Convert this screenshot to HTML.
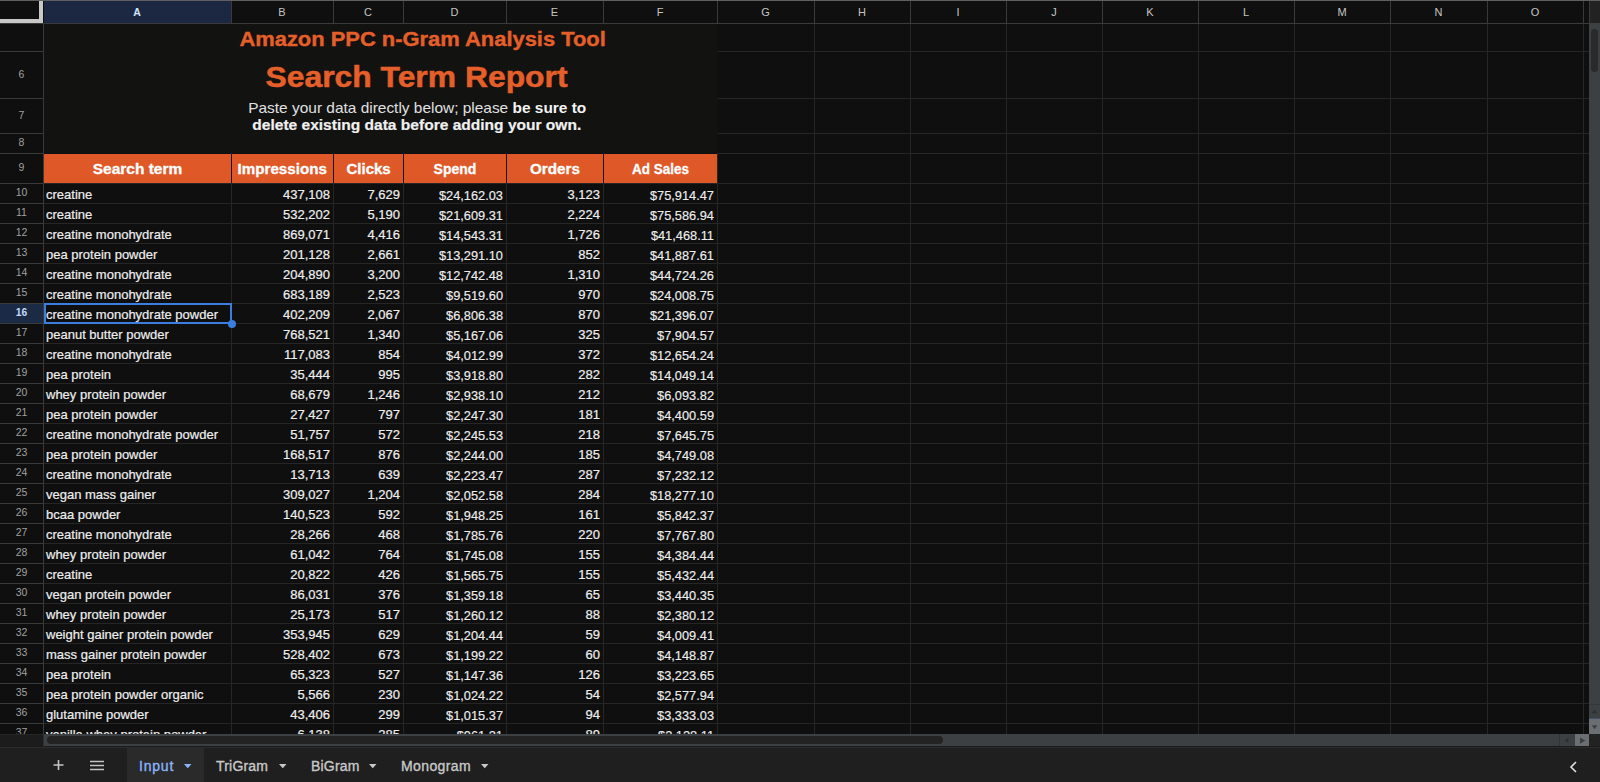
<!DOCTYPE html><html><head><meta charset="utf-8"><style>
*{margin:0;padding:0;box-sizing:border-box}
html,body{width:1600px;height:782px;overflow:hidden;background:#0f0f0f;font-family:"Liberation Sans",sans-serif}
.a{position:absolute}
.hl{position:absolute;height:1px;background:#262626}
.vl{position:absolute;width:1px;background:#262626}
.ch{position:absolute;top:1px;height:22px;line-height:22px;text-align:center;font-size:11px;color:#c4c4c4}
.rh{position:absolute;left:0;width:43px;text-align:center;font-size:10.5px;color:#a0a0a0}
.t{position:absolute;white-space:nowrap;font-size:13px;color:#eeeeee;height:20px;line-height:20px;-webkit-text-stroke:0.2px #eeeeee}
.n{position:absolute;white-space:nowrap;font-size:13px;color:#eeeeee;text-align:right;height:20px;line-height:20px;-webkit-text-stroke:0.2px #eeeeee}
.m{position:absolute;white-space:nowrap;font-size:12.8px;color:#eeeeee;text-align:right;height:20px;line-height:20px;-webkit-text-stroke:0.15px #eeeeee}
.hd{position:absolute;top:154px;height:29px;line-height:31px;background:#de5828;color:#fff;font-weight:bold;font-size:14px;text-align:center;-webkit-text-stroke:0.3px #fff}

</style></head><body>
<div class="hl" style="left:43px;top:23px;width:1546px"></div>
<div class="hl" style="left:717px;top:51px;width:872px"></div>
<div class="hl" style="left:717px;top:98px;width:872px"></div>
<div class="hl" style="left:717px;top:133px;width:872px"></div>
<div class="hl" style="left:717px;top:153px;width:872px"></div>
<div class="hl" style="left:43px;top:183px;width:1546px"></div>
<div class="hl" style="left:43px;top:203px;width:1546px"></div>
<div class="hl" style="left:43px;top:223px;width:1546px"></div>
<div class="hl" style="left:43px;top:243px;width:1546px"></div>
<div class="hl" style="left:43px;top:263px;width:1546px"></div>
<div class="hl" style="left:43px;top:283px;width:1546px"></div>
<div class="hl" style="left:43px;top:303px;width:1546px"></div>
<div class="hl" style="left:43px;top:323px;width:1546px"></div>
<div class="hl" style="left:43px;top:343px;width:1546px"></div>
<div class="hl" style="left:43px;top:363px;width:1546px"></div>
<div class="hl" style="left:43px;top:383px;width:1546px"></div>
<div class="hl" style="left:43px;top:403px;width:1546px"></div>
<div class="hl" style="left:43px;top:423px;width:1546px"></div>
<div class="hl" style="left:43px;top:443px;width:1546px"></div>
<div class="hl" style="left:43px;top:463px;width:1546px"></div>
<div class="hl" style="left:43px;top:483px;width:1546px"></div>
<div class="hl" style="left:43px;top:503px;width:1546px"></div>
<div class="hl" style="left:43px;top:523px;width:1546px"></div>
<div class="hl" style="left:43px;top:543px;width:1546px"></div>
<div class="hl" style="left:43px;top:563px;width:1546px"></div>
<div class="hl" style="left:43px;top:583px;width:1546px"></div>
<div class="hl" style="left:43px;top:603px;width:1546px"></div>
<div class="hl" style="left:43px;top:623px;width:1546px"></div>
<div class="hl" style="left:43px;top:643px;width:1546px"></div>
<div class="hl" style="left:43px;top:663px;width:1546px"></div>
<div class="hl" style="left:43px;top:683px;width:1546px"></div>
<div class="hl" style="left:43px;top:703px;width:1546px"></div>
<div class="hl" style="left:43px;top:723px;width:1546px"></div>
<div class="vl" style="left:231px;top:153px;height:581px"></div>
<div class="vl" style="left:333px;top:153px;height:581px"></div>
<div class="vl" style="left:403px;top:153px;height:581px"></div>
<div class="vl" style="left:506px;top:153px;height:581px"></div>
<div class="vl" style="left:603px;top:153px;height:581px"></div>
<div class="vl" style="left:717px;top:153px;height:581px"></div>
<div class="vl" style="left:814px;top:23px;height:711px"></div>
<div class="vl" style="left:910px;top:23px;height:711px"></div>
<div class="vl" style="left:1006px;top:23px;height:711px"></div>
<div class="vl" style="left:1102px;top:23px;height:711px"></div>
<div class="vl" style="left:1198px;top:23px;height:711px"></div>
<div class="vl" style="left:1294px;top:23px;height:711px"></div>
<div class="vl" style="left:1390px;top:23px;height:711px"></div>
<div class="vl" style="left:1487px;top:23px;height:711px"></div>
<div class="vl" style="left:1583px;top:23px;height:711px"></div>
<div class="a" style="left:44px;top:24px;width:674px;height:129px;background:#121211"></div>
<div class="a" style="left:23px;top:27px;width:800px;text-align:center;line-height:24px"><span style="display:inline-block;color:#e45f2a;font-weight:bold;font-size:21px;transform:scaleX(1.043);-webkit-text-stroke:0.4px #e45f2a">Amazon PPC n-Gram Analysis Tool</span></div>
<div class="a" style="left:17px;top:61px;width:800px;text-align:center;line-height:32px"><span style="display:inline-block;color:#e45f2a;font-weight:bold;font-size:29px;transform:scaleX(1.098);-webkit-text-stroke:0.5px #e45f2a">Search Term Report</span></div>
<div class="a" style="left:17px;top:99px;width:800px;text-align:center;line-height:17px;color:#f0f0f0;font-size:15px"><span style="display:inline-block;transform:scaleX(1.029);color:#e0e0e0">Paste your data directly below; please <b style="color:#f4f4f4">be sure to</b></span><br><span style="display:inline-block;transform:scaleX(1.036);font-weight:bold;-webkit-text-stroke:0.2px #f0f0f0">delete existing data before adding your own.</span></div>
<div class="hd" style="left:44px;width:187px"><span style="display:inline-block;transform:scaleX(1.105)">Search term</span></div>
<div class="hd" style="left:232px;width:101px"><span style="display:inline-block;transform:scaleX(1.083)">Impressions</span></div>
<div class="vl" style="left:231px;top:154px;height:29px;background:#161616"></div>
<div class="hd" style="left:334px;width:69px"><span style="display:inline-block;transform:scaleX(1.07)">Clicks</span></div>
<div class="vl" style="left:333px;top:154px;height:29px;background:#161616"></div>
<div class="hd" style="left:404px;width:102px"><span style="display:inline-block;transform:scaleX(1.0)">Spend</span></div>
<div class="vl" style="left:403px;top:154px;height:29px;background:#161616"></div>
<div class="hd" style="left:507px;width:96px"><span style="display:inline-block;transform:scaleX(1.09)">Orders</span></div>
<div class="vl" style="left:506px;top:154px;height:29px;background:#161616"></div>
<div class="hd" style="left:604px;width:113px"><span style="display:inline-block;transform:scaleX(0.962)">Ad Sales</span></div>
<div class="vl" style="left:603px;top:154px;height:29px;background:#161616"></div>
<div class="t" style="left:46px;top:185px">creatine</div>
<div class="n" style="right:1270px;top:185px">437,108</div>
<div class="n" style="right:1200px;top:185px">7,629</div>
<div class="m" style="right:1097px;top:185.5px">$24,162.03</div>
<div class="n" style="right:1000px;top:185px">3,123</div>
<div class="m" style="right:886px;top:185.5px">$75,914.47</div>
<div class="t" style="left:46px;top:205px">creatine</div>
<div class="n" style="right:1270px;top:205px">532,202</div>
<div class="n" style="right:1200px;top:205px">5,190</div>
<div class="m" style="right:1097px;top:205.5px">$21,609.31</div>
<div class="n" style="right:1000px;top:205px">2,224</div>
<div class="m" style="right:886px;top:205.5px">$75,586.94</div>
<div class="t" style="left:46px;top:225px">creatine monohydrate</div>
<div class="n" style="right:1270px;top:225px">869,071</div>
<div class="n" style="right:1200px;top:225px">4,416</div>
<div class="m" style="right:1097px;top:225.5px">$14,543.31</div>
<div class="n" style="right:1000px;top:225px">1,726</div>
<div class="m" style="right:886px;top:225.5px">$41,468.11</div>
<div class="t" style="left:46px;top:245px">pea protein powder</div>
<div class="n" style="right:1270px;top:245px">201,128</div>
<div class="n" style="right:1200px;top:245px">2,661</div>
<div class="m" style="right:1097px;top:245.5px">$13,291.10</div>
<div class="n" style="right:1000px;top:245px">852</div>
<div class="m" style="right:886px;top:245.5px">$41,887.61</div>
<div class="t" style="left:46px;top:265px">creatine monohydrate</div>
<div class="n" style="right:1270px;top:265px">204,890</div>
<div class="n" style="right:1200px;top:265px">3,200</div>
<div class="m" style="right:1097px;top:265.5px">$12,742.48</div>
<div class="n" style="right:1000px;top:265px">1,310</div>
<div class="m" style="right:886px;top:265.5px">$44,724.26</div>
<div class="t" style="left:46px;top:285px">creatine monohydrate</div>
<div class="n" style="right:1270px;top:285px">683,189</div>
<div class="n" style="right:1200px;top:285px">2,523</div>
<div class="m" style="right:1097px;top:285.5px">$9,519.60</div>
<div class="n" style="right:1000px;top:285px">970</div>
<div class="m" style="right:886px;top:285.5px">$24,008.75</div>
<div class="t" style="left:46px;top:305px">creatine monohydrate powder</div>
<div class="n" style="right:1270px;top:305px">402,209</div>
<div class="n" style="right:1200px;top:305px">2,067</div>
<div class="m" style="right:1097px;top:305.5px">$6,806.38</div>
<div class="n" style="right:1000px;top:305px">870</div>
<div class="m" style="right:886px;top:305.5px">$21,396.07</div>
<div class="t" style="left:46px;top:325px">peanut butter powder</div>
<div class="n" style="right:1270px;top:325px">768,521</div>
<div class="n" style="right:1200px;top:325px">1,340</div>
<div class="m" style="right:1097px;top:325.5px">$5,167.06</div>
<div class="n" style="right:1000px;top:325px">325</div>
<div class="m" style="right:886px;top:325.5px">$7,904.57</div>
<div class="t" style="left:46px;top:345px">creatine monohydrate</div>
<div class="n" style="right:1270px;top:345px">117,083</div>
<div class="n" style="right:1200px;top:345px">854</div>
<div class="m" style="right:1097px;top:345.5px">$4,012.99</div>
<div class="n" style="right:1000px;top:345px">372</div>
<div class="m" style="right:886px;top:345.5px">$12,654.24</div>
<div class="t" style="left:46px;top:365px">pea protein</div>
<div class="n" style="right:1270px;top:365px">35,444</div>
<div class="n" style="right:1200px;top:365px">995</div>
<div class="m" style="right:1097px;top:365.5px">$3,918.80</div>
<div class="n" style="right:1000px;top:365px">282</div>
<div class="m" style="right:886px;top:365.5px">$14,049.14</div>
<div class="t" style="left:46px;top:385px">whey protein powder</div>
<div class="n" style="right:1270px;top:385px">68,679</div>
<div class="n" style="right:1200px;top:385px">1,246</div>
<div class="m" style="right:1097px;top:385.5px">$2,938.10</div>
<div class="n" style="right:1000px;top:385px">212</div>
<div class="m" style="right:886px;top:385.5px">$6,093.82</div>
<div class="t" style="left:46px;top:405px">pea protein powder</div>
<div class="n" style="right:1270px;top:405px">27,427</div>
<div class="n" style="right:1200px;top:405px">797</div>
<div class="m" style="right:1097px;top:405.5px">$2,247.30</div>
<div class="n" style="right:1000px;top:405px">181</div>
<div class="m" style="right:886px;top:405.5px">$4,400.59</div>
<div class="t" style="left:46px;top:425px">creatine monohydrate powder</div>
<div class="n" style="right:1270px;top:425px">51,757</div>
<div class="n" style="right:1200px;top:425px">572</div>
<div class="m" style="right:1097px;top:425.5px">$2,245.53</div>
<div class="n" style="right:1000px;top:425px">218</div>
<div class="m" style="right:886px;top:425.5px">$7,645.75</div>
<div class="t" style="left:46px;top:445px">pea protein powder</div>
<div class="n" style="right:1270px;top:445px">168,517</div>
<div class="n" style="right:1200px;top:445px">876</div>
<div class="m" style="right:1097px;top:445.5px">$2,244.00</div>
<div class="n" style="right:1000px;top:445px">185</div>
<div class="m" style="right:886px;top:445.5px">$4,749.08</div>
<div class="t" style="left:46px;top:465px">creatine monohydrate</div>
<div class="n" style="right:1270px;top:465px">13,713</div>
<div class="n" style="right:1200px;top:465px">639</div>
<div class="m" style="right:1097px;top:465.5px">$2,223.47</div>
<div class="n" style="right:1000px;top:465px">287</div>
<div class="m" style="right:886px;top:465.5px">$7,232.12</div>
<div class="t" style="left:46px;top:485px">vegan mass gainer</div>
<div class="n" style="right:1270px;top:485px">309,027</div>
<div class="n" style="right:1200px;top:485px">1,204</div>
<div class="m" style="right:1097px;top:485.5px">$2,052.58</div>
<div class="n" style="right:1000px;top:485px">284</div>
<div class="m" style="right:886px;top:485.5px">$18,277.10</div>
<div class="t" style="left:46px;top:505px">bcaa powder</div>
<div class="n" style="right:1270px;top:505px">140,523</div>
<div class="n" style="right:1200px;top:505px">592</div>
<div class="m" style="right:1097px;top:505.5px">$1,948.25</div>
<div class="n" style="right:1000px;top:505px">161</div>
<div class="m" style="right:886px;top:505.5px">$5,842.37</div>
<div class="t" style="left:46px;top:525px">creatine monohydrate</div>
<div class="n" style="right:1270px;top:525px">28,266</div>
<div class="n" style="right:1200px;top:525px">468</div>
<div class="m" style="right:1097px;top:525.5px">$1,785.76</div>
<div class="n" style="right:1000px;top:525px">220</div>
<div class="m" style="right:886px;top:525.5px">$7,767.80</div>
<div class="t" style="left:46px;top:545px">whey protein powder</div>
<div class="n" style="right:1270px;top:545px">61,042</div>
<div class="n" style="right:1200px;top:545px">764</div>
<div class="m" style="right:1097px;top:545.5px">$1,745.08</div>
<div class="n" style="right:1000px;top:545px">155</div>
<div class="m" style="right:886px;top:545.5px">$4,384.44</div>
<div class="t" style="left:46px;top:565px">creatine</div>
<div class="n" style="right:1270px;top:565px">20,822</div>
<div class="n" style="right:1200px;top:565px">426</div>
<div class="m" style="right:1097px;top:565.5px">$1,565.75</div>
<div class="n" style="right:1000px;top:565px">155</div>
<div class="m" style="right:886px;top:565.5px">$5,432.44</div>
<div class="t" style="left:46px;top:585px">vegan protein powder</div>
<div class="n" style="right:1270px;top:585px">86,031</div>
<div class="n" style="right:1200px;top:585px">376</div>
<div class="m" style="right:1097px;top:585.5px">$1,359.18</div>
<div class="n" style="right:1000px;top:585px">65</div>
<div class="m" style="right:886px;top:585.5px">$3,440.35</div>
<div class="t" style="left:46px;top:605px">whey protein powder</div>
<div class="n" style="right:1270px;top:605px">25,173</div>
<div class="n" style="right:1200px;top:605px">517</div>
<div class="m" style="right:1097px;top:605.5px">$1,260.12</div>
<div class="n" style="right:1000px;top:605px">88</div>
<div class="m" style="right:886px;top:605.5px">$2,380.12</div>
<div class="t" style="left:46px;top:625px">weight gainer protein powder</div>
<div class="n" style="right:1270px;top:625px">353,945</div>
<div class="n" style="right:1200px;top:625px">629</div>
<div class="m" style="right:1097px;top:625.5px">$1,204.44</div>
<div class="n" style="right:1000px;top:625px">59</div>
<div class="m" style="right:886px;top:625.5px">$4,009.41</div>
<div class="t" style="left:46px;top:645px">mass gainer protein powder</div>
<div class="n" style="right:1270px;top:645px">528,402</div>
<div class="n" style="right:1200px;top:645px">673</div>
<div class="m" style="right:1097px;top:645.5px">$1,199.22</div>
<div class="n" style="right:1000px;top:645px">60</div>
<div class="m" style="right:886px;top:645.5px">$4,148.87</div>
<div class="t" style="left:46px;top:665px">pea protein</div>
<div class="n" style="right:1270px;top:665px">65,323</div>
<div class="n" style="right:1200px;top:665px">527</div>
<div class="m" style="right:1097px;top:665.5px">$1,147.36</div>
<div class="n" style="right:1000px;top:665px">126</div>
<div class="m" style="right:886px;top:665.5px">$3,223.65</div>
<div class="t" style="left:46px;top:685px">pea protein powder organic</div>
<div class="n" style="right:1270px;top:685px">5,566</div>
<div class="n" style="right:1200px;top:685px">230</div>
<div class="m" style="right:1097px;top:685.5px">$1,024.22</div>
<div class="n" style="right:1000px;top:685px">54</div>
<div class="m" style="right:886px;top:685.5px">$2,577.94</div>
<div class="t" style="left:46px;top:705px">glutamine powder</div>
<div class="n" style="right:1270px;top:705px">43,406</div>
<div class="n" style="right:1200px;top:705px">299</div>
<div class="m" style="right:1097px;top:705.5px">$1,015.37</div>
<div class="n" style="right:1000px;top:705px">94</div>
<div class="m" style="right:886px;top:705.5px">$3,333.03</div>
<div class="t" style="left:46px;top:725px">vanilla whey protein powder</div>
<div class="n" style="right:1270px;top:725px">6,138</div>
<div class="n" style="right:1200px;top:725px">285</div>
<div class="m" style="right:1097px;top:725.5px">$961.21</div>
<div class="n" style="right:1000px;top:725px">89</div>
<div class="m" style="right:886px;top:725.5px">$2,128.11</div>
<div class="a" style="left:0;top:734px;width:1600px;height:48px;background:#1f1f1f"></div>
<div class="a" style="left:0;top:23px;width:43px;height:711px;background:#0f0f0f"></div>
<div class="hl" style="left:0;top:23px;width:43px;background:#3a3a3a"></div>
<div class="hl" style="left:0;top:51px;width:43px;background:#3a3a3a"></div>
<div class="rh" style="top:51px;height:47px;line-height:46px;">6</div>
<div class="hl" style="left:0;top:98px;width:43px;background:#3a3a3a"></div>
<div class="rh" style="top:98px;height:35px;line-height:34px;">7</div>
<div class="hl" style="left:0;top:133px;width:43px;background:#3a3a3a"></div>
<div class="rh" style="top:133px;height:20px;line-height:19px;">8</div>
<div class="hl" style="left:0;top:153px;width:43px;background:#3a3a3a"></div>
<div class="rh" style="top:153px;height:30px;line-height:29px;">9</div>
<div class="hl" style="left:0;top:183px;width:43px;background:#3a3a3a"></div>
<div class="rh" style="top:183px;height:20px;line-height:19px;">10</div>
<div class="hl" style="left:0;top:203px;width:43px;background:#3a3a3a"></div>
<div class="rh" style="top:203px;height:20px;line-height:19px;">11</div>
<div class="hl" style="left:0;top:223px;width:43px;background:#3a3a3a"></div>
<div class="rh" style="top:223px;height:20px;line-height:19px;">12</div>
<div class="hl" style="left:0;top:243px;width:43px;background:#3a3a3a"></div>
<div class="rh" style="top:243px;height:20px;line-height:19px;">13</div>
<div class="hl" style="left:0;top:263px;width:43px;background:#3a3a3a"></div>
<div class="rh" style="top:263px;height:20px;line-height:19px;">14</div>
<div class="hl" style="left:0;top:283px;width:43px;background:#3a3a3a"></div>
<div class="rh" style="top:283px;height:20px;line-height:19px;">15</div>
<div class="hl" style="left:0;top:303px;width:43px;background:#3a3a3a"></div>
<div class="a" style="left:0;top:304px;width:43px;height:19px;background:#1b2a45"></div>
<div class="rh" style="top:303px;height:20px;line-height:19px;font-weight:bold;color:#c6dafc;font-size:10.3px;">16</div>
<div class="hl" style="left:0;top:323px;width:43px;background:#3a3a3a"></div>
<div class="rh" style="top:323px;height:20px;line-height:19px;">17</div>
<div class="hl" style="left:0;top:343px;width:43px;background:#3a3a3a"></div>
<div class="rh" style="top:343px;height:20px;line-height:19px;">18</div>
<div class="hl" style="left:0;top:363px;width:43px;background:#3a3a3a"></div>
<div class="rh" style="top:363px;height:20px;line-height:19px;">19</div>
<div class="hl" style="left:0;top:383px;width:43px;background:#3a3a3a"></div>
<div class="rh" style="top:383px;height:20px;line-height:19px;">20</div>
<div class="hl" style="left:0;top:403px;width:43px;background:#3a3a3a"></div>
<div class="rh" style="top:403px;height:20px;line-height:19px;">21</div>
<div class="hl" style="left:0;top:423px;width:43px;background:#3a3a3a"></div>
<div class="rh" style="top:423px;height:20px;line-height:19px;">22</div>
<div class="hl" style="left:0;top:443px;width:43px;background:#3a3a3a"></div>
<div class="rh" style="top:443px;height:20px;line-height:19px;">23</div>
<div class="hl" style="left:0;top:463px;width:43px;background:#3a3a3a"></div>
<div class="rh" style="top:463px;height:20px;line-height:19px;">24</div>
<div class="hl" style="left:0;top:483px;width:43px;background:#3a3a3a"></div>
<div class="rh" style="top:483px;height:20px;line-height:19px;">25</div>
<div class="hl" style="left:0;top:503px;width:43px;background:#3a3a3a"></div>
<div class="rh" style="top:503px;height:20px;line-height:19px;">26</div>
<div class="hl" style="left:0;top:523px;width:43px;background:#3a3a3a"></div>
<div class="rh" style="top:523px;height:20px;line-height:19px;">27</div>
<div class="hl" style="left:0;top:543px;width:43px;background:#3a3a3a"></div>
<div class="rh" style="top:543px;height:20px;line-height:19px;">28</div>
<div class="hl" style="left:0;top:563px;width:43px;background:#3a3a3a"></div>
<div class="rh" style="top:563px;height:20px;line-height:19px;">29</div>
<div class="hl" style="left:0;top:583px;width:43px;background:#3a3a3a"></div>
<div class="rh" style="top:583px;height:20px;line-height:19px;">30</div>
<div class="hl" style="left:0;top:603px;width:43px;background:#3a3a3a"></div>
<div class="rh" style="top:603px;height:20px;line-height:19px;">31</div>
<div class="hl" style="left:0;top:623px;width:43px;background:#3a3a3a"></div>
<div class="rh" style="top:623px;height:20px;line-height:19px;">32</div>
<div class="hl" style="left:0;top:643px;width:43px;background:#3a3a3a"></div>
<div class="rh" style="top:643px;height:20px;line-height:19px;">33</div>
<div class="hl" style="left:0;top:663px;width:43px;background:#3a3a3a"></div>
<div class="rh" style="top:663px;height:20px;line-height:19px;">34</div>
<div class="hl" style="left:0;top:683px;width:43px;background:#3a3a3a"></div>
<div class="rh" style="top:683px;height:20px;line-height:19px;">35</div>
<div class="hl" style="left:0;top:703px;width:43px;background:#3a3a3a"></div>
<div class="rh" style="top:703px;height:20px;line-height:19px;">36</div>
<div class="hl" style="left:0;top:723px;width:43px;background:#3a3a3a"></div>
<div class="rh" style="top:723px;height:20px;line-height:19px;">37</div>
<div class="vl" style="left:43px;top:23px;height:711px;background:#3a3a3a"></div>
<div class="a" style="left:0;top:0;width:1600px;height:24px;background:#0f0f0f"></div>
<div class="hl" style="left:0;top:23px;width:1589px;background:#3a3a3a"></div>
<div class="a" style="left:44px;top:1px;width:187px;height:22px;background:#1c2841"></div>
<div class="ch" style="left:43px;width:188px;font-weight:bold;color:#d2e3fc;font-size:10.5px;">A</div>
<div class="ch" style="left:231px;width:102px;">B</div>
<div class="vl" style="left:231px;top:1px;height:22px;background:#3a3a3a"></div>
<div class="ch" style="left:333px;width:70px;">C</div>
<div class="vl" style="left:333px;top:1px;height:22px;background:#3a3a3a"></div>
<div class="ch" style="left:403px;width:103px;">D</div>
<div class="vl" style="left:403px;top:1px;height:22px;background:#3a3a3a"></div>
<div class="ch" style="left:506px;width:97px;">E</div>
<div class="vl" style="left:506px;top:1px;height:22px;background:#3a3a3a"></div>
<div class="ch" style="left:603px;width:114px;">F</div>
<div class="vl" style="left:603px;top:1px;height:22px;background:#3a3a3a"></div>
<div class="ch" style="left:717px;width:97px;">G</div>
<div class="vl" style="left:717px;top:1px;height:22px;background:#3a3a3a"></div>
<div class="ch" style="left:814px;width:96px;">H</div>
<div class="vl" style="left:814px;top:1px;height:22px;background:#3a3a3a"></div>
<div class="ch" style="left:910px;width:96px;">I</div>
<div class="vl" style="left:910px;top:1px;height:22px;background:#3a3a3a"></div>
<div class="ch" style="left:1006px;width:96px;">J</div>
<div class="vl" style="left:1006px;top:1px;height:22px;background:#3a3a3a"></div>
<div class="ch" style="left:1102px;width:96px;">K</div>
<div class="vl" style="left:1102px;top:1px;height:22px;background:#3a3a3a"></div>
<div class="ch" style="left:1198px;width:96px;">L</div>
<div class="vl" style="left:1198px;top:1px;height:22px;background:#3a3a3a"></div>
<div class="ch" style="left:1294px;width:96px;">M</div>
<div class="vl" style="left:1294px;top:1px;height:22px;background:#3a3a3a"></div>
<div class="ch" style="left:1390px;width:97px;">N</div>
<div class="vl" style="left:1390px;top:1px;height:22px;background:#3a3a3a"></div>
<div class="ch" style="left:1487px;width:96px;">O</div>
<div class="vl" style="left:1487px;top:1px;height:22px;background:#3a3a3a"></div>
<div class="vl" style="left:1583px;top:1px;height:22px;background:#3a3a3a"></div>
<div class="a" style="left:0;top:1px;width:43px;height:22px;background:#0f0f0f"></div>
<div class="a" style="left:39px;top:1px;width:4px;height:22px;background:#c8c8c8"></div>
<div class="a" style="left:0;top:19px;width:43px;height:4px;background:#c8c8c8"></div>
<div class="a" style="left:44px;top:303px;width:188px;height:21px;border:2px solid #3c7ee0"></div>
<div class="a" style="left:227.5px;top:319.5px;width:8px;height:8px;border-radius:50%;background:#3c7ee0"></div>
<div class="a" style="left:1589px;top:0;width:11px;height:24px;background:#222"></div>
<div class="vl" style="left:1589px;top:1px;height:22px;background:#3a3a3a"></div>
<div class="a" style="left:1589px;top:23px;width:11px;height:681px;background:#3c4043"></div>
<div class="a" style="left:1591px;top:29px;width:7px;height:43px;border-radius:4px;background:#2a2a2a"></div>
<div class="a" style="left:1589px;top:704px;width:11px;height:15px;background:#3c4043;border-top:1px solid #33373a;border-bottom:1px solid #445066"></div>
<div class="a" style="left:1589px;top:719px;width:11px;height:15px;background:#6b6e72"></div>
<svg class="a" style="left:1589px;top:704px" width="11" height="30"><path d="M2.8 9.2 L5.6 5.8 L8.4 9.2Z" fill="#2b2f32"/><path d="M2.8 21.2 L5.6 25.2 L8.4 21.2Z" fill="#3c4043"/></svg>
<div class="a" style="left:0;top:734px;width:43px;height:13px;background:#1c1c1c;border-top:1px solid #262626"></div>
<div class="vl" style="left:43px;top:734px;height:13px;background:#303030"></div>
<div class="a" style="left:44px;top:734px;width:1516px;height:12px;background:#3c4043"></div>
<div class="a" style="left:47px;top:736px;width:896px;height:8px;border-radius:4px;background:#232323"></div>
<div class="a" style="left:1559px;top:734px;width:1px;height:12px;background:#303437"></div>
<div class="a" style="left:1560px;top:734px;width:15px;height:12px;background:#3c4043"></div>
<div class="a" style="left:1575px;top:734px;width:14px;height:12px;background:#6b6e72"></div>
<svg class="a" style="left:1560px;top:734px" width="29" height="12"><path d="M8.3 3.5 L4.8 6.3 L8.3 9Z" fill="#2b2f32"/><path d="M20 3.5 L25.3 6.5 L20 9.8Z" fill="#3c4043"/></svg>
<div class="a" style="left:1589px;top:734px;width:11px;height:12px;background:#222"></div>
<div class="a" style="left:0;top:746px;width:1600px;height:1px;background:#1a1a1a"></div>
<div class="a" style="left:0;top:747px;width:1600px;height:1px;background:#2c2c2c"></div>
<div class="a" style="left:0;top:748px;width:1600px;height:34px;background:#1f1f1f"></div>
<div class="a" style="left:127px;top:748px;width:77px;height:34px;background:#2a2a2a"></div>
<svg class="a" style="left:50px;top:757px" width="60" height="16"><path d="M8.5 3 V13 M3.5 8 H13.5" stroke="#c4c4c4" stroke-width="1.6"/><path d="M40 4.5 H54 M40 8.5 H54 M40 12.5 H54" stroke="#c4c4c4" stroke-width="1.6"/></svg>
<div class="a" style="left:139px;top:758px;font-size:14px;line-height:17px;color:#8ab4f8;white-space:nowrap;letter-spacing:0.8px;-webkit-text-stroke:0.35px #8ab4f8">Input</div>
<svg class="a" style="left:184px;top:763.5px" width="9" height="6"><path d="M0 0 L7.5 0 L3.75 4.3Z" fill="#8ab4f8"/></svg>
<div class="a" style="left:216px;top:758px;font-size:14px;line-height:17px;color:#c8c8c8;white-space:nowrap;letter-spacing:0.2px;-webkit-text-stroke:0.35px #c8c8c8">TriGram</div>
<svg class="a" style="left:279px;top:763.5px" width="9" height="6"><path d="M0 0 L7.5 0 L3.75 4.3Z" fill="#c8c8c8"/></svg>
<div class="a" style="left:311px;top:758px;font-size:14px;line-height:17px;color:#c8c8c8;white-space:nowrap;letter-spacing:0.2px;-webkit-text-stroke:0.35px #c8c8c8">BiGram</div>
<svg class="a" style="left:369px;top:763.5px" width="9" height="6"><path d="M0 0 L7.5 0 L3.75 4.3Z" fill="#c8c8c8"/></svg>
<div class="a" style="left:401px;top:758px;font-size:14px;line-height:17px;color:#c8c8c8;white-space:nowrap;letter-spacing:0.4px;-webkit-text-stroke:0.35px #c8c8c8">Monogram</div>
<svg class="a" style="left:481px;top:763.5px" width="9" height="6"><path d="M0 0 L7.5 0 L3.75 4.3Z" fill="#c8c8c8"/></svg>
<svg class="a" style="left:1566px;top:759.5px" width="14" height="14"><path d="M10 2 L5 7 L10 12" stroke="#e0e0e0" stroke-width="1.6" fill="none"/></svg>
<div class="hl" style="left:0;top:0;width:1600px;background:#5f5f5f"></div>
</body></html>
